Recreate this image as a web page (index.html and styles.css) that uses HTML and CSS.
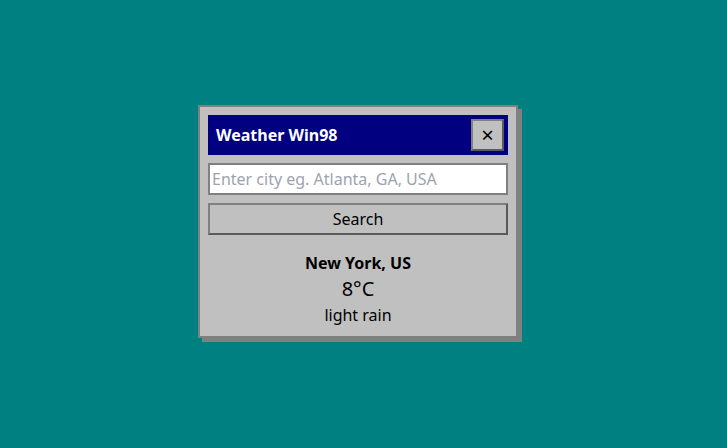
FILE: index.html
```html
<!DOCTYPE html>
<html>
<head>
<meta charset="utf-8">
<link rel="stylesheet" href="styles.css">
</head>
<body>
<div class="window">
  <div class="titlebar">
    <span class="title">Weather Win98</span>
    <button class="close">×</button>
  </div>
  <input class="city-input" type="text" placeholder="Enter city eg. Atlanta, GA, USA">
  <button class="search">Search</button>
  <div class="result">
    <div class="city">New York, US</div>
    <div class="temp">8°C</div>
    <div class="desc">light rain</div>
  </div>
</div>
</body>
</html>
```
FILE: styles.css
```css
html, body {
  margin: 0;
  height: 100%;
}
body {
  background: #008080;
  font-family: "Noto Sans", sans-serif;
  padding: 105px 0 0 198px;
  box-sizing: border-box;
}
.window {
  width: 320px;
  box-sizing: border-box;
  background: #c0c0c0;
  border: 2px solid #808080;
  box-shadow: 4px 4px 0 #808080;
  padding: 8px;
  display: flex;
  flex-direction: column;
  gap: 8px;
}
.titlebar {
  height: 40px;
  background: #000080;
  display: flex;
  align-items: center;
  justify-content: space-between;
  padding: 0 4px 0 8px;
}
.title {
  color: #ffffff;
  font-weight: bold;
  font-size: 16px;
}
.close {
  width: 33px;
  height: 32px;
  box-sizing: border-box;
  background: #c0c0c0;
  border: 2px solid;
  border-color: #808080 #5a5a5a #5a5a5a #808080;
  font-family: "Noto Sans", sans-serif;
  font-size: 22px;
  line-height: 1;
  padding: 0 0 2px 0;
  color: #000;
  display: flex;
  align-items: center;
  justify-content: center;
}
.city-input {
  height: 32px;
  box-sizing: border-box;
  border: 2px solid #808080;
  background: #ffffff;
  font-family: "Noto Sans", sans-serif;
  font-size: 16px;
  padding: 0 2px;
  margin: 0;
  outline: none;
}
.city-input::placeholder {
  color: #9ca3af;
}
.search {
  height: 32px;
  box-sizing: border-box;
  background: #c0c0c0;
  border: 2px solid;
  border-color: #808080 #5a5a5a #5a5a5a #808080;
  font-family: "Noto Sans", sans-serif;
  font-size: 16px;
  color: #000;
  padding: 0;
  margin: 0;
}
.result {
  padding-top: 9px;
  text-align: center;
  color: #000;
}
.city {
  font-weight: bold;
  font-size: 16px;
  line-height: 22px;
}
.temp {
  font-size: 20px;
  line-height: 28px;
  margin-top: 1px;
}
.desc {
  font-size: 16px;
  line-height: 25px;
}
```
